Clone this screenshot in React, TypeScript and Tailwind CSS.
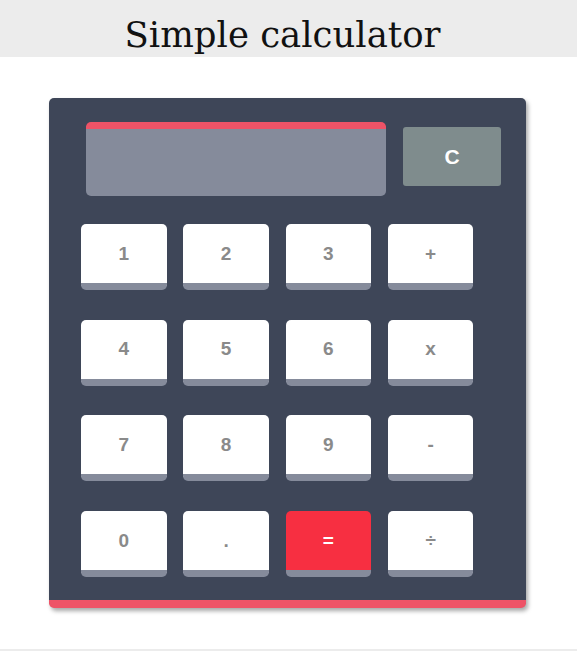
const rows = [
  ["1", "2", "3", "+"],
  ["4", "5", "6", "x"],
  ["7", "8", "9", "-"],
  ["0", ".", "=", "÷"],
];

function Key({ label }: { label: string }) {
  const isEquals = label === "=";
  return (
    <button
      type="button"
      className={`flex h-[66px] items-center justify-center rounded-[5px] border-b-[7px] border-[#858b9b] pt-[1px] font-['Liberation_Sans',Arial,sans-serif] text-[19px] font-bold ${
        isEquals ? "bg-[#f72f41] text-white" : "bg-white text-[#8a8a8a]"
      }`}
    >
      {label}
    </button>
  );
}

export default function App() {
  return (
    <div className="min-h-[651px] bg-white">
      <h1 className="h-[57px] bg-[#ececec] pt-[15px] pr-[12px] text-center font-['DejaVu_Serif',serif] text-[35.5px] leading-[40px] font-normal whitespace-nowrap text-[#111]">
        Simple calculator
      </h1>

      <div className="mt-[41px] ml-[49px] w-[477px] rounded-[5px] border-b-[8px] border-[#ee5367] bg-[#3e4658] pt-[24px] pb-[23px] shadow-[2px_3px_4px_rgba(0,0,0,0.35)]">
        <div className="flex items-start">
          <div className="ml-[37px] h-[74px] w-[300px] rounded-[5px] border-t-[7px] border-[#ee5367] bg-[#858b9b]" />
          <button
            type="button"
            className="mt-[5px] ml-[17px] flex h-[59px] w-[98px] items-center justify-center rounded-[3px] bg-[#7f8c8d] font-['Liberation_Sans',Arial,sans-serif] text-[21px] font-bold text-white"
          >
            C
          </button>
        </div>

        <div className="mt-[28px] ml-[32px] grid grid-cols-[repeat(4,85.6px)] gap-x-[16.7px] gap-y-[29.7px]">
          {rows.flat().map((label) => (
            <Key key={label} label={label} />
          ))}
        </div>
      </div>

      <div className="mt-[41px] h-[4px] bg-[#ececec]" />
    </div>
  );
}
